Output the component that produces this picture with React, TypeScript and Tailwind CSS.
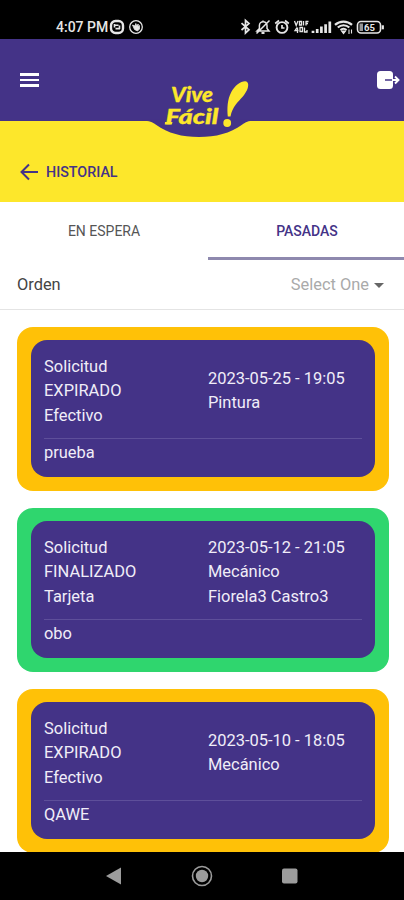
import clsx from "clsx";

type Order = {
  status: string;
  payment: string;
  details: string[];
  note: string;
};

const orders: Order[] = [
  {
    status: "EXPIRADO",
    payment: "Efectivo",
    details: ["2023-05-25 - 19:05", "Pintura"],
    note: "prueba",
  },
  {
    status: "FINALIZADO",
    payment: "Tarjeta",
    details: ["2023-05-12 - 21:05", "Mecánico", "Fiorela3 Castro3"],
    note: "obo",
  },
  {
    status: "EXPIRADO",
    payment: "Efectivo",
    details: ["2023-05-10 - 18:05", "Mecánico"],
    note: "QAWE",
  },
];

const StatusBar = () => (
  <div className="flex h-[39px] shrink-0 items-end justify-between bg-black pb-[4px] pl-[56px] pr-[20px] text-[#e6e6e6]">
    <div className="flex items-center">
      <span className="w-[53px] whitespace-nowrap text-[14px] font-medium leading-4">4:07 PM</span>
      <svg width="36" height="16" viewBox="0 0 36 16" fill="none" stroke="currentColor">
        <rect x="2" y="2" width="12" height="12" rx="4.5" strokeWidth="2.4" />
        <path d="M5 6.2h4.5M6.5 9.6H11M5.5 5v3.5M10.500 6.500v3.500" strokeWidth="1.6" />
        <circle cx="27" cy="8" r="6.3" strokeWidth="1.3" />
        <path d="M23.5 6l2 4.5 3 1.5 2-2V6.5l-1.3 1V5l-1.4 2-1-2.5-.8 2.5z" fill="currentColor" strokeWidth=".8" />
      </svg>
    </div>

    <svg width="145" height="18" viewBox="0 0 145 18" fill="none" stroke="currentColor" className="mb-[-1px]">
      {/* bluetooth */}
      <path d="M2.500 5.2l7.500 6.6-3.5 3.2V2.4L10 5.6 2.500 12" strokeWidth="1.7" />
      {/* muted bell */}
      <path d="M18 13h12l-2-2.5V7.5a3.8 3.8 0 0 0-7.600 0v3zM24 4V2.500M17.500 15.500L30.500 2.500" strokeWidth="1.5" />
      <path d="M22.5 15h3" strokeWidth="2" />
      {/* alarm */}
      <circle cx="43" cy="9.5" r="5.400" strokeWidth="1.9" />
      <path d="M36.200 5.500L40 2.500M49.800 5.500L46 2.500M43 7v3h2.500" strokeWidth="1.700" />
      {/* volte */}
      <path d="M55.500 3l1.700 4.500L59 3M60.500 3.500h2v3.500h-2zM64.500 3v4.500M66.500 3.500h3M67 3v4.500M66.500 5.500h2.500M58 9.500l-2 3h3.500M58.500 9.500V15M61 9.500v4h2.500v-4zM65.500 9.500v4.500h2.500v-2" strokeWidth="1.300" />
      {/* signal */}
      <path d="M74 15v-2.200M78.200 15v-4M82.400 15V8.500M86.600 15V6.200M90.800 15V3.500" strokeWidth="2.700" />
      {/* wifi */}
      <path d="M96 6.900a12.500 12.500 0 0 1 17 0M98.800 9.500a8.500 8.500 0 0 1 11.500 0M101.500 12a4.300 4.300 0 0 1 6 0" strokeWidth="2.200" />
      <path d="M102.500 13l2 2.500 2-2.500zM110 11.500v4.500M112.500 11.500v4" fill="currentColor" strokeWidth="1.100" />
      {/* battery */}
      <rect x="118.500" y="3.500" width="23" height="11.500" rx="3.500" strokeWidth="1.600" />
      <path d="M143.800 7.300v4" strokeWidth="2.200" />
      <path d="M120.500 5.500h3.500v7.500h-3.500z" fill="currentColor" stroke="none" opacity=".65" />
      <text x="125" y="12.600" fontSize="9.500" fontWeight="700" fill="currentColor" stroke="none">65</text>
    </svg>
  </div>
);

const Logo = () => (
  <svg className="absolute left-[142px] top-[36px] z-10" width="112" height="64" viewBox="142 75 112 64">
    <path d="M142 119.500h112v1.200c-6 0-8 1.300-12 4-12 8.500-26 12.300-43 12.300s-31-3.800-43-12.300c-4-2.700-6-4-14-4z" fill="#443387" />
    <g fontFamily="Lato, sans-serif" fontWeight="900" fontStyle="italic" fill="#fde72b" stroke="#fde72b" strokeWidth=".3">
      <text x="171" y="101.800" fontSize="21" textLength="42" lengthAdjust="spacingAndGlyphs">Vive</text>
      <text x="165.500" y="124.300" fontSize="21" textLength="53" lengthAdjust="spacingAndGlyphs">Fácil</text>
    </g>
    {/* foot of the script F */}
    <path d="M165 122h7.500l-.7 2.500h-7z" fill="#fde72b" />
    <path
      d="M227.800 116.500c-.8-8-.5-17 3.500-24.500 3.500-6.500 9.500-11 14-10.800 3 .2 3.500 3.500 2.400 7-2 6-7.500 11-11.700 16-2.800 3.500-4.600 7.500-5.500 12.300z"
      fill="#fde72b"
    />
    <circle cx="227.200" cy="123" r="3.900" fill="#fde72b" />
  </svg>
);

const Header = () => (
  <header className="relative flex h-[81.500px] shrink-0 items-center justify-between bg-[#443387] pl-[20px] pr-[4px]">
    <div className="flex w-[19px] flex-col gap-[3px]">
      <span className="h-[2.500px] bg-white" />
      <span className="h-[2.500px] bg-white" />
      <span className="h-[2.500px] bg-white" />
    </div>
    <Logo />
    <svg width="24" height="20" viewBox="0 0 24 20" fill="none">
      <rect x="1" y="1" width="16" height="18" rx="3.500" fill="#fff" />
      <path d="M9 10h8" stroke="#443387" strokeWidth="1.500" />
      <path d="M16 10h6M19 6.500l3.500 3.500-3.500 3.500" stroke="#fff" strokeWidth="1.900" />
    </svg>
  </header>
);

const OrderCard = ({ order }: { order: Order }) => (
  <div
    className={clsx(
      "h-[164px] shrink-0 rounded-[16px] p-[13.500px]",
      order.status === "FINALIZADO" ? "bg-[#2fd66e]" : "bg-[#ffc107]"
    )}
  >
    <div className="h-full rounded-[16px] bg-[#443387] px-[13.500px] pt-[14.500px] text-[16.450px] leading-[24.600px] text-[#f0edf8]">
      <div className="grid grid-cols-[164px_1fr] items-center">
        <div>
          <p>Solicitud</p>
          <p>{order.status}</p>
          <p>{order.payment}</p>
        </div>
        <div className="whitespace-nowrap">
          {order.details.map((line) => (
            <p key={line}>{line}</p>
          ))}
        </div>
      </div>
      <hr className="mt-[9.500px] border-[#5e4f9a]" />
      <p className="mt-[2px]">{order.note}</p>
    </div>
  </div>
);

const App = () => {
  return (
    <div className="flex h-[900px] w-[404px] flex-col overflow-hidden bg-white font-[Roboto,sans-serif]">
      <StatusBar />
      <Header />

      {/* Page title */}
      <div className="flex h-[81.500px] shrink-0 items-end gap-[8px] bg-[#fde72b] pb-[21px] pl-[20px] text-[#443387]">
        <svg width="18" height="18" viewBox="0 0 18 18" fill="none" stroke="currentColor" strokeWidth="2">
          <path d="M18 9H2M9 1.500L1.500 9 9 16.500" />
        </svg>
        <h1 className="text-[14.300px] font-medium leading-[17px]">HISTORIAL</h1>
      </div>

      {/* Tabs */}
      <div className="flex h-[58px] shrink-0 text-[14px] leading-[56px]">
        <button className="w-[208px] text-center text-[#555]">EN ESPERA</button>
        <button className="flex-1 border-b-[3px] border-[#8e89ae] pl-[2px] pt-[1px] text-center font-medium text-[#443387]">
          PASADAS
        </button>
      </div>

      {/* Filter */}
      <div className="flex h-[49.500px] shrink-0 items-center border-b border-[#e4e4e4] pl-[17px] pr-[20px] pt-[2px] text-[16.400px]">
        <span className="flex-1 text-[#444]">Orden</span>
        <span className="text-[#aaa]">Select One</span>
        <span className="ml-[5px] border-x-[5px] border-t-[5px] border-x-transparent border-t-[#666]" />
      </div>

      {/* Orders */}
      <main className="flex min-h-0 flex-1 flex-col gap-[17px] overflow-hidden pl-[17px] pr-[15.500px] pt-[17px]">
        {orders.map((order) => (
          <OrderCard key={order.details[0]} order={order} />
        ))}
      </main>

      {/* Android navigation */}
      <nav className="flex h-[48px] shrink-0 items-center justify-center bg-black">
        <svg width="192" height="22" viewBox="0 0 192 22" fill="#9c9c9c">
          <path d="M0 11l15-8.500v17z" />
          <circle cx="96" cy="11" r="9.500" fill="none" stroke="#9c9c9c" strokeWidth="1.600" />
          <circle cx="96" cy="11" r="6.200" />
          <rect x="176" y="3.500" width="15.500" height="15" rx="2" />
        </svg>
      </nav>
    </div>
  );
};

export default App;
